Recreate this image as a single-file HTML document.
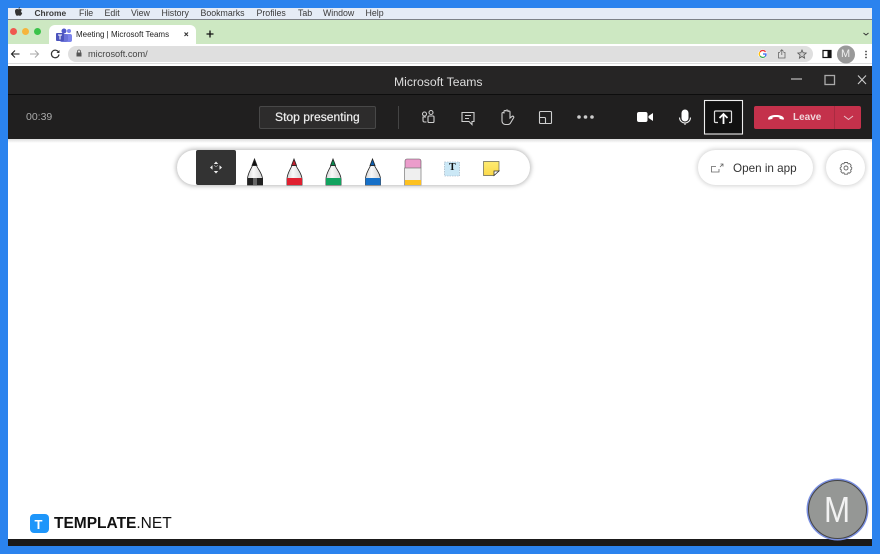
<!DOCTYPE html>
<html><head><meta charset="utf-8"><style>
*{margin:0;padding:0;box-sizing:border-box}
html,body{width:880px;height:554px;overflow:hidden;background:#2b83ee;font-family:"Liberation Sans",sans-serif}
.a{position:absolute}
.t{position:absolute;white-space:nowrap;line-height:1}
svg{position:absolute;overflow:visible}
.m{top:9px;font-size:8.800px;color:#3a3a3a}
</style></head><body>
<div class="a" style="left:8px;top:8px;width:864px;height:11px;background:#e5ecf6"></div>
<div class="a" style="left:8px;top:19px;width:864px;height:1px;background:#7d8288"></div>
<div class="a" style="left:8px;top:20px;width:864px;height:24px;background:#cde8c2"></div>
<div class="a" style="left:8px;top:44px;width:864px;height:22px;background:#fff"></div>
<div class="a" style="left:8px;top:63px;width:864px;height:1px;background:#ddd"></div>

<svg style="left:0;top:0" width="40" height="20"><path d="M15 11c0-1.500 1-2 2-2 .6 0 1 .3 1.500.3s1-.3 1.600-.3c.8 0 1.400.4 1.800 1-1.200.8-1 2.500.3 3-.4 1.200-1.200 2.800-2.200 2.800-.6 0-.9-.3-1.500-.3s-1 .3-1.500.3C16 15.800 15 13 15 11z" fill="#333"/><path d="M18.500 8.800c0-.8.600-1.500 1.500-1.600 0 .9-.6 1.600-1.500 1.600z" fill="#333"/></svg>
<div class="t m" style="left:34.500px;font-weight:bold;font-size:8.400px">Chrome</div>
<div class="t m" style="left:79px">File</div>
<div class="t m" style="left:104.500px">Edit</div>
<div class="t m" style="left:131px">View</div>
<div class="t m" style="left:161.500px">History</div>
<div class="t m" style="left:200.500px">Bookmarks</div>
<div class="t m" style="left:256.500px">Profiles</div>
<div class="t m" style="left:298px">Tab</div>
<div class="t m" style="left:323px">Window</div>
<div class="t m" style="left:365.500px">Help</div>

<div class="a" style="left:10px;top:28px;width:7px;height:7px;border-radius:50%;background:#f0584f"></div>
<div class="a" style="left:22px;top:28px;width:7px;height:7px;border-radius:50%;background:#f5b53d"></div>
<div class="a" style="left:34px;top:28px;width:7px;height:7px;border-radius:50%;background:#3bc34a"></div>

<div class="a" style="left:49px;top:25px;width:147px;height:19px;background:#fff;border-radius:6px 6px 0 0"></div>
<svg style="left:0;top:0" width="80" height="50">
<circle cx="69" cy="31" r="2" fill="#7b83eb"/><rect x="66" y="34" width="6" height="8" rx="2" fill="#7b83eb"/>
<circle cx="64" cy="31" r="2.500" fill="#5059c9"/><rect x="60" y="34" width="8" height="8" rx="2" fill="#6a72d8"/>
<rect x="56" y="33" width="8" height="8" rx="1" fill="#4b53bc"/>
<path d="M58 35h4M60 35v4.500" stroke="#fff" stroke-width="1" fill="none"/>
</svg>
<div class="t" style="left:76px;top:30.500px;font-size:8px;color:#222">Meeting | Microsoft Teams</div>
<svg style="left:0;top:0" width="220" height="50">
<path d="M184.500 32.500l3.500 3.500M188 32.500l-3.500 3.500" stroke="#333" stroke-width="1.100"/>
<path d="M210 30.500v7M206.500 34h7" stroke="#111" stroke-width="1.300"/>
</svg>
<div class="a" style="left:68px;top:46px;width:745px;height:16px;background:#dfdfdf;border-radius:8px"></div>
<svg style="left:0;top:0" width="90" height="64">
<path d="M19.500 54h-8M15 50.500L11.500 54l3.500 3.500" stroke="#222" stroke-width="1.100" fill="none"/>
<path d="M30 54h8M35 50.500l3.500 3.500-3.500 3.500" stroke="#aaa" stroke-width="1.100" fill="none"/>
<path d="M58.500 52a3.800 3.800 0 1 0 .5 2.500" stroke="#333" stroke-width="1.200" fill="none"/><path d="M59.500 50v3h-3z" fill="#333"/>
<rect x="76.500" y="52.500" width="5" height="4" fill="#555"/><path d="M77.500 52.500v-1a1.500 1.500 0 0 1 3 0v1" stroke="#555" fill="none" stroke-width=".8"/></svg>
<div class="t" style="left:88px;top:49.500px;font-size:9.200px;color:#444">microsoft.com/</div>

<svg style="left:0;top:0" width="880" height="70">
<path d="M863.500 33l2.500 2 2.500-2" stroke="#333" fill="none" stroke-width="1"/>
<circle cx="762.500" cy="54" r="4.500" fill="#fff"/>
<path d="M765.500 52a3.300 3.300 0 0 0-5.500 0" stroke="#e33" stroke-width="1.200" fill="none"/>
<path d="M760 52a3.300 3.300 0 0 0 0 4" stroke="#fb0" stroke-width="1.200" fill="none"/>
<path d="M760 56a3.300 3.300 0 0 0 5 .5" stroke="#3a5" stroke-width="1.200" fill="none"/>
<path d="M763 54h3a3.300 3.300 0 0 1-.8 2.500" stroke="#36e" stroke-width="1.200" fill="none"/>
<path d="M780 52.500h-1.500v5.500h6.500v-5.500h-1.500M781.800 55v-5M780 51.500l1.800-1.800 1.800 1.800" stroke="#666" fill="none" stroke-width=".8"/>
<path d="M802 50l1.200 2.800 3 .3-2.300 2 .7 3-2.600-1.600-2.600 1.600.7-3-2.300-2 3-.3z" stroke="#555" fill="#ccc" stroke-width=".8"/>
<rect x="823" y="50.500" width="8" height="7" fill="#fff" stroke="#111" stroke-width="1.200"/><rect x="827.500" y="50.500" width="3.500" height="7" fill="#111"/>
<circle cx="846" cy="54.500" r="9" fill="#999"/>
<circle cx="866" cy="51.500" r=".9" fill="#444"/><circle cx="866" cy="54.500" r=".9" fill="#444"/><circle cx="866" cy="57.500" r=".9" fill="#444"/>
</svg>
<div class="t" style="left:841px;top:49px;font-size:11px;color:#eee">M</div>

<div class="a" style="left:8px;top:66px;width:864px;height:29px;background:#262525"></div>
<div class="a" style="left:8px;top:94px;width:864px;height:1px;background:#0d0d0d"></div>
<div class="a" style="left:8px;top:95px;width:864px;height:44px;background:#201f1f"></div>
<div class="t" style="left:394px;top:75.500px;font-size:12.200px;color:#ddd">Microsoft Teams</div>
<svg style="left:0;top:0" width="880" height="100">
<path d="M791 79h11" stroke="#ddd" stroke-width="1"/>
<rect x="825" y="75.500" width="9.500" height="9" fill="none" stroke="#aaa" stroke-width="1.300"/>
<path d="M858 75.500l8 8.500M866 75.500l-8 8.500" stroke="#ccc" stroke-width="1.100"/>
</svg>

<div class="t" style="left:26px;top:112px;font-size:10.500px;color:#aaa">00:39</div>
<div class="a" style="left:259px;top:106px;width:117px;height:23px;background:#2d2c2c;border:1px solid #484848;border-radius:2px"></div>
<div class="t" style="left:275px;top:111px;font-size:12.100px;color:#eee;-webkit-text-stroke:.2px #eee">Stop presenting</div>
<div class="a" style="left:398px;top:106px;width:1px;height:23px;background:#444"></div>

<svg style="left:0;top:0" width="880" height="140" fill="none" stroke="#cfcfcf" stroke-width="1.100">
<circle cx="424.500" cy="114" r="2"/><circle cx="431" cy="112.500" r="2"/><rect x="428" y="116" width="6" height="6.500" rx="1"/><path d="M426 117h-3v3.500a1.500 1.500 0 0 0 1.500 1.500h2"/>
<path d="M462 112.500h12v9h-2v3l-3-3h-7z"/><path d="M465 115.500h6M465 118.500h4"/>
<path d="M502 115v-1.500a1 1 0 0 1 2 0v-2a1 1 0 0 1 2 0v-.5a1 1 0 0 1 2 0v1a1 1 0 0 1 2 0v6l2-1.500a1 1 0 0 1 1.500 1.500l-3 5a3 3 0 0 1-2.500 1.500h-2.500a3.500 3.500 0 0 1-3.500-3.500z"/>
<rect x="539.500" y="111.500" width="12" height="12" rx="1"/><path d="M539.500 117.500h5a1 1 0 0 1 1 1v5"/>
<circle cx="579" cy="117" r="1.800" fill="#ccc" stroke="none"/><circle cx="585.500" cy="117" r="1.800" fill="#ccc" stroke="none"/><circle cx="592" cy="117" r="1.800" fill="#ccc" stroke="none"/>
<rect x="637" y="112" width="10.500" height="10" rx="2" fill="#fff" stroke="none"/><path d="M648.500 116l4.500-3v8l-4.500-3z" fill="#fff" stroke="none"/>
<rect x="681.500" y="109.500" width="7" height="12" rx="3.500" fill="#fff" stroke="none"/><path d="M679.500 117.500a5.500 5.500 0 0 0 11 0M685 123v2" stroke="#eee"/>
<rect x="704.500" y="100.500" width="38" height="33.500" stroke="#eee" fill="#111"/>
<path d="M718 122.500h-2.500a1 1 0 0 1-1-1v-9.500a1 1 0 0 1 1-1h15a1 1 0 0 1 1 1v9.500a1 1 0 0 1-1 1H729" stroke="#ddd" stroke-width="1.200"/>
<path d="M723.500 124v-9M719.500 118l4-4 4 4" stroke="#fff" stroke-width="1.800"/>
</svg>
<div class="a" style="left:754px;top:106px;width:107px;height:23px;background:#c4314b;border-radius:2px"></div>
<div class="a" style="left:834px;top:106px;width:1px;height:23px;background:#a92b41"></div>
<svg style="left:0;top:0" width="880" height="140" fill="none">
<path d="M768 118.500c1-2.800 4.500-3.500 8-3.500s7 .7 8 3.500l-.5 1.200-4-.8v-1.400c-2.300-.6-4.700-.6-7 0v1.400l-4 .8z" fill="#fff"/>
<path d="M844 116l4.500 3.500 4.500-3.500" stroke="#e8c5cb" stroke-width="1"/>
</svg>
<div class="t" style="left:793px;top:112.500px;font-size:10px;font-weight:bold;color:#f0d5da">Leave</div>

<div class="a" style="left:8px;top:139px;width:864px;height:400px;background:#fff"></div>
<div class="a" style="left:8px;top:139px;width:864px;height:4px;background:linear-gradient(#dedede,#fff)"></div>
<div class="a" style="left:8px;top:539px;width:864px;height:7px;background:#1b1a1a"></div>

<div class="a" style="left:177px;top:150px;width:353px;height:35px;background:#fff;border-radius:18px;box-shadow:0 0 5px 1px rgba(0,0,0,.28)"></div>
<div class="a" style="left:196px;top:150px;width:40px;height:35px;background:#333;border-radius:2px"></div>
<svg style="left:0;top:0" width="880" height="190">
<g fill="#eee"><path d="M216 161.500l2.200 2.500h-4.400z"/><path d="M216 173.500l2.200-2.500h-4.400z"/><path d="M210 167.500l2.500-2.200v4.400z"/><path d="M222 167.500l-2.500-2.200v4.400z"/></g>
<path d="M214 165.500l2 1M218 165.500l-2 1" stroke="#eee" stroke-width=".5"/>
<defs>
<linearGradient id="b" x1="0" x2="1"><stop offset="0" stop-color="#d4d4d4"/><stop offset=".4" stop-color="#f8f8f8"/><stop offset="1" stop-color="#d4d4d4"/></linearGradient>
</defs>
<g stroke="#222" stroke-width=".8">
<path d="M247.500 185v-6c0-5 3-9 5-13.500h4c2 4.500 6 8.500 6 13.500v6z" fill="url(#b)"/><path d="M252 165.500l2.500-6.500 2.500 6.500z" fill="#111"/><rect x="247.500" y="178" width="15.500" height="7" fill="#222" stroke="none"/><rect x="253" y="178" width="4" height="7" fill="#666" stroke="none"/>
<path d="M287 185v-6c0-5 3-9 5-13.500h4c2 4.500 6 8.500 6 13.500v6z" fill="url(#b)"/><path d="M291.500 165.500l2.500-6.500 2.500 6.500z" fill="#c4202f"/><rect x="287" y="178" width="15" height="7" fill="#e02030" stroke="none"/>
<path d="M326 185v-6c0-5 3-9 5-13.500h4c2 4.500 6 8.500 6 13.500v6z" fill="url(#b)"/><path d="M330.500 165.500l2.500-6.500 2.500 6.500z" fill="#0c8a50"/><rect x="326" y="178" width="15" height="7" fill="#12a35f" stroke="none"/>
<path d="M365.500 185v-6c0-5 3-9 5-13.500h4c2 4.500 6 8.500 6 13.500v6z" fill="url(#b)"/><path d="M370 165.500l2.500-6.500 2.500 6.500z" fill="#0d5fb0"/><rect x="365.500" y="178" width="15" height="7" fill="#1670c8" stroke="none"/>
</g>
<path d="M405 161a2 2 0 0 1 2-2h12a2 2 0 0 1 2 2v7h-16z" fill="#eb9ccb" stroke="#555" stroke-width=".6"/>
<rect x="404.500" y="168" width="16.500" height="17" fill="#efefef" stroke="#888" stroke-width=".8"/>
<rect x="405" y="180" width="16" height="5" fill="#fdc120"/>
<rect x="444.500" y="162" width="15" height="14" fill="#cbe8f6" stroke="#9ab" stroke-width=".6" stroke-dasharray="1.500 1"/>
<defs><linearGradient id="y" x1="0" y1="0" x2="0" y2="1"><stop offset="0" stop-color="#feec72"/><stop offset="1" stop-color="#fbd94a"/></linearGradient></defs>
<path d="M483.500 161.500h15.500v9l-5 5h-10.500z" fill="url(#y)" stroke="#665" stroke-width=".7"/>
<path d="M494 175.500v-4.500h5z" fill="#fff" stroke="#333" stroke-width=".8"/>
</svg>
<div class="t" style="left:449px;top:163px;font-size:10px;font-weight:bold;color:#111;font-family:'Liberation Serif',serif">T</div>

<div class="a" style="left:698px;top:150px;width:115px;height:35px;background:#fff;border-radius:18px;box-shadow:0 0 5px 1px rgba(0,0,0,.18)"></div>
<svg style="left:0;top:0" width="880" height="190" fill="none" stroke="#666" stroke-width=".8">
<path d="M716 166.500h-4.500v5.500h7.500v-3M720 167l2.500-2.500M720.500 164h2.500v2.500"/>
</svg>
<div class="t" style="left:733px;top:162.500px;font-size:11.700px;color:#333">Open in app</div>
<div class="a" style="left:826px;top:150px;width:39px;height:35px;background:#fff;border-radius:18px;box-shadow:0 0 5px 1px rgba(0,0,0,.18)"></div>
<svg style="left:0;top:0" width="880" height="190" fill="none" stroke="#666" stroke-width=".9">
<circle cx="846" cy="168" r="2"/><path d="M844.500 162.500h3l.6 1.400 1.500-.3 1.500 1.600-.5 1.500 1.200 1-.1.300 0 1-1.100 1 .5 1.500-1.500 1.600-1.500-.3-.6 1.400h-3l-.6-1.400-1.500.3-1.500-1.600.5-1.500-1.200-1v-1.300l1.200-1-.5-1.500 1.500-1.600 1.500.3z"/>
</svg>

<div class="a" style="left:30px;top:514px;width:19px;height:19px;border-radius:4px;background:#1e96fa"></div>
<div class="t" style="left:34.500px;top:517.500px;font-size:13px;font-weight:bold;color:#fff">T</div>
<div class="t" style="left:54px;top:516px;font-size:15.500px;font-weight:bold;color:#111">TEMPLATE<span style="font-weight:normal">.NET</span></div>

<div class="a" style="left:808px;top:480px;width:59px;height:59px;border-radius:50%;background:#959795;border:1px solid #444;box-shadow:0 0 0 1.500px #7a8fe0"></div>
<div class="t" style="left:824px;top:492px;font-size:36px;color:#f2f2f2;transform:scaleX(.87);transform-origin:left top">M</div>
</body></html>
